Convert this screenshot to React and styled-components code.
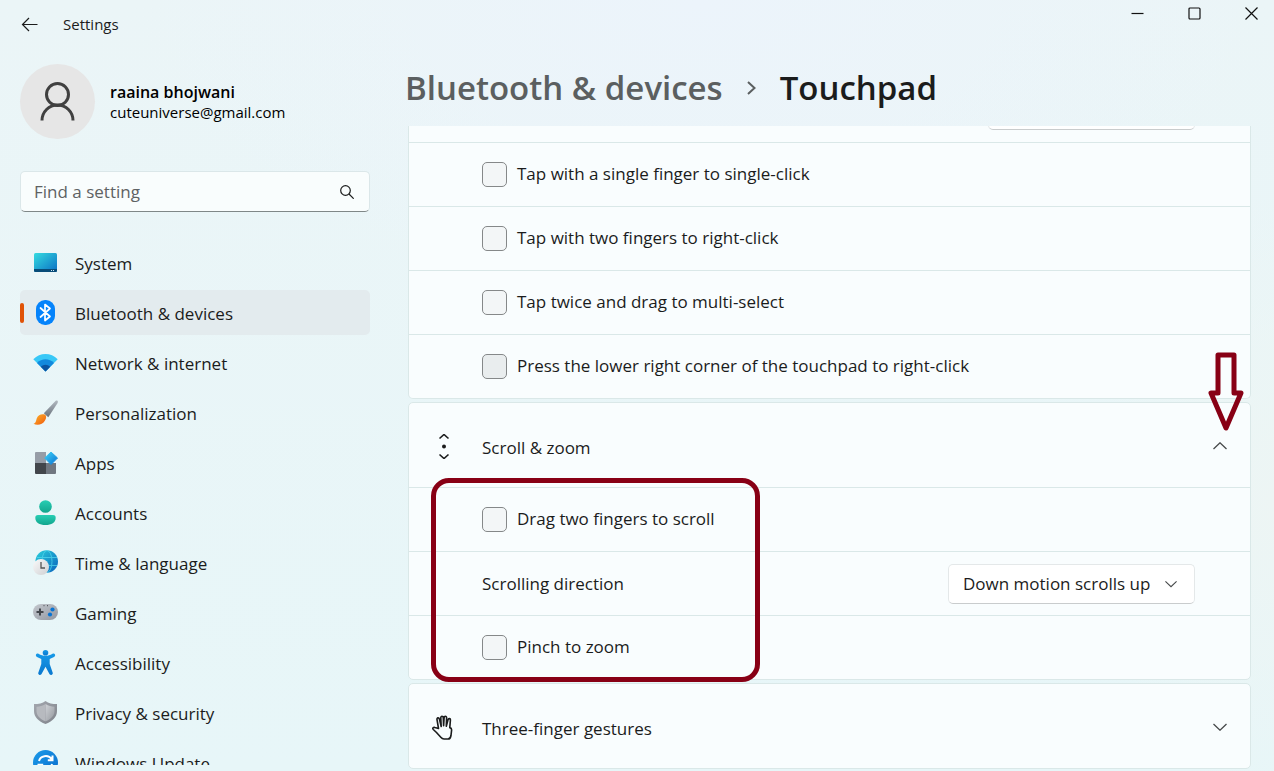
import React, { useState } from 'react';
import styled, { createGlobalStyle, css } from 'styled-components';

const GlobalStyle = createGlobalStyle`
  * {
    box-sizing: border-box;
  }

  body {
    margin: 0;
    color: #1b1c1c;
    font-family: 'Open Sans', 'Noto Sans', sans-serif;
    font-size: 17px;
    line-height: 24px;
  }

  button, input, select {
    margin: 0;
    color: inherit;
    font: inherit;
  }
`;

const Window = styled.div`
  display: flex;
  flex-direction: column;
  height: 100vh;
  overflow: hidden;
  background:
    radial-gradient(ellipse 45% 40% at 55% 0, #ecf4fb, rgba(236, 244, 251, 0)),
    radial-gradient(ellipse 14% 40% at 100% 65%, #edf5f4, rgba(237, 245, 244, 0)),
    linear-gradient(#ebf5f7, #e7f6f8);
`;

const TitleBar = styled.header`
  display: flex;
  justify-content: space-between;
  height: 48px;
  padding: 0 0 0 20px;
`;

const TitleGroup = styled.div`
  display: flex;
  align-items: center;
  gap: 23px;
  font-size: 15px;
`;

const IconButton = styled.button`
  display: flex;
  padding: 0;
  border: 0;
  background: none;
`;

const Controls = styled.div`
  display: flex;
  gap: 11px;
`;

const ControlButton = styled(IconButton)`
  align-items: center;
  justify-content: center;
  width: 46px;
  height: 26px;
`;

const Body = styled.div`
  display: grid;
  grid-template-columns: 370px minmax(0, 1fr);
  gap: 38px;
  flex: 1;
  min-height: 0;
`;

const Sidebar = styled.aside`
  display: flex;
  flex-direction: column;
  min-height: 0;
  padding: 16px 0 6px 20px;
`;

const Profile = styled.div`
  display: flex;
  align-items: center;
  gap: 15px;
`;

const Avatar = styled.div`
  display: flex;
  align-items: center;
  justify-content: center;
  width: 75px;
  height: 75px;
  border-radius: 50%;
  background: #e6e6e6;
`;

const UserName = styled.div`
  color: #000;
  font-size: 16px;
  font-weight: 600;
  line-height: 20px;
`;

const UserMail = styled.div`
  color: #000;
  font-size: 15px;
  line-height: 20px;
`;

const Search = styled.label`
  display: flex;
  align-items: center;
  height: 41px;
  margin-top: 32px;
  padding: 0 15px 0 13px;
  border: 1px solid #dbe7e9;
  border-bottom-color: #7f8787;
  border-radius: 5px;
  background: #f9fdfd;
`;

const SearchInput = styled.input`
  flex: 1;
  min-width: 0;
  padding: 0;
  border: 0;
  outline: 0;
  background: none;

  &::placeholder {
    color: #5e6263;
    opacity: 1;
  }
`;

const Nav = styled.nav`
  display: flex;
  flex: 1;
  flex-direction: column;
  gap: 5px;
  min-height: 0;
  margin-top: 28px;
  overflow: hidden;
`;

const NavLink = styled.a`
  display: flex;
  flex: none;
  align-items: center;
  gap: 17px;
  height: 45px;
  padding-right: 12px;
  border-radius: 5px;
  color: inherit;
  text-decoration: none;

  &::before {
    width: 4px;
    height: 20px;
    margin-right: -8px;
    border-radius: 2px;
    content: '';
  }

  ${({ $active }) => $active && css`
    background: #e3ebee;

    &::before {
      background: #e05206;
    }
  `}
`;

const NavLabel = styled.span`
  padding-top: 2px;
`;

const Main = styled.main`
  display: flex;
  flex-direction: column;
  min-width: 0;
  min-height: 0;
  padding: 2px 23px 0 0;
`;

const Breadcrumb = styled.h1`
  display: flex;
  flex: none;
  align-items: center;
  gap: 24px;
  height: 76px;
  margin: 0 0 0 -3px;
  font-size: 33px;
  font-weight: 600;
  line-height: 48px;
`;

const Crumb = styled.a`
  color: #5b5f60;
  text-decoration: none;
`;

const List = styled.div`
  display: flex;
  flex: 1;
  flex-direction: column;
  gap: 3px;
  min-height: 0;
  overflow: hidden;
`;

const Card = styled.section`
  position: relative;
  flex: none;
  border: 1px solid #dae8e8;
  border-radius: ${({ $scrolled }) => ($scrolled ? '0 0 5px 5px' : '5px')};
  border-top-width: ${({ $scrolled }) => ($scrolled ? 0 : 1)}px;
  background: #f9fdfe;
`;

const CardHeader = styled.div`
  display: grid;
  grid-template-columns: 24px minmax(0, 1fr) auto;
  align-items: center;
  gap: 26px;
  height: 84px;
  padding: 2px 23px 0 23px;
`;

const CardTitle = styled.span`
  padding-top: 4px;
`;

const Row = styled.div`
  display: flex;
  align-items: center;
  justify-content: space-between;
  height: 64px;
  padding: 0 55px 0 73px;
  border-top: 1px solid #dae8e8;
`;

const ScrolledRow = styled.div`
  display: flex;
  align-items: flex-end;
  justify-content: flex-end;
  height: 16px;
  padding: 0 55px 12px 73px;
  overflow: hidden;
`;

const CheckLabel = styled.label`
  display: flex;
  align-items: center;
  gap: 10px;
`;

const CheckText = styled.span`
  padding-bottom: 2px;
`;

const Checkbox = styled.input.attrs({ type: 'checkbox' })`
  width: 25px;
  height: 25px;
  border: 1px solid #858889;
  border-radius: 5px;
  background: ${({ $muted }) => ($muted ? '#e9edee' : '#f3f6f7')};
  appearance: none;
`;

const SelectBox = styled.div`
  display: grid;
  flex: none;
  align-items: center;
  width: ${({ $width }) => $width}px;
  height: 40px;

  > * {
    grid-area: 1 / 1;
  }

  > svg {
    justify-self: end;
    margin-right: 18px;
    pointer-events: none;
  }
`;

const Select = styled.select`
  width: 100%;
  height: 40px;
  padding: 0 40px 0 14px;
  border: 1px solid #e4e8e9;
  border-bottom-color: #c9cccd;
  border-radius: 5px;
  background: #fff;
  appearance: none;
`;

const HighlightBox = styled.div`
  position: absolute;
  top: 75px;
  left: 22px;
  width: 329px;
  height: 204px;
  border: 5px solid #880015;
  border-radius: 18px;
  pointer-events: none;
`;

const Arrow = styled.svg`
  position: absolute;
  top: -51px;
  right: 6px;
  pointer-events: none;
`;

const Icon = ({ size = 25, children, ...rest }) => (
  <svg width={size} height={size} viewBox={`0 0 ${size} ${size}`} fill="none" aria-hidden="true" {...rest}>
    {children}
  </svg>
);

const Gradient = ({ id, from, to, x2 = 1, y2 = 1 }) => (
  <linearGradient id={id} x1="0" y1="0" x2={x2} y2={y2}>
    <stop stopColor={from} />
    <stop offset="1" stopColor={to} />
  </linearGradient>
);

const Chevron = ({ up, size = 14 }) => (
  <svg width={size} height="8" viewBox="0 0 14 8" fill="none" stroke="#46494a" strokeWidth="1.3" aria-hidden="true">
    <path d={up ? 'M.5 7 7 .8 13.500 7' : 'M.5 1 7 7.200 13.500 1'} />
  </svg>
);

const SystemIcon = () => (
  <Icon>
    <Gradient id="system" from="#35dbe0" to="#0a6fc4" />
    <rect x="1" y="3" width="23" height="19" rx="1.500" fill="url(#system)" />
    <path d="M1 19h23v1.500a1.500 1.500 0 0 1-1.500 1.500h-20A1.500 1.500 0 0 1 1 20.500z" fill="#084c78" />
    <path d="M18 20.500h1M20 20.500h1" stroke="#cfe8f5" />
  </Icon>
);

const BluetoothIcon = () => (
  <Icon>
    <rect x="3" width="19" height="25" rx="9" fill="#0583fb" />
    <path d="m7.500 8 9.500 8.500-5 4v-16l5 4L7.500 17" stroke="#fff" strokeWidth="1.700" strokeLinejoin="round" strokeLinecap="round" />
  </Icon>
);

const NetworkIcon = () => (
  <Icon>
    <path d="M.3 9.300C7 2.200 18 2.200 24.700 9.300L12.500 21.500z" fill="#38c8f7" />
    <path d="M4 13c4.700-5 12.300-5 17 0l-8.500 8.500z" fill="#1389dd" />
    <path d="M7.800 16.800c2.600-2.700 6.800-2.700 9.400 0l-4.700 4.700z" fill="#0c54a0" />
  </Icon>
);

const PersonalizationIcon = () => (
  <Icon>
    <Gradient id="handle" from="#b1b8bf" to="#69727c" x2={0} />
    <Gradient id="bristle" from="#fdb62b" to="#f0590d" />
    <path d="M22.500.9c1.600-1 3 .3 2.100 2L15.300 17.300l-4.500-4z" fill="url(#handle)" />
    <path d="M10.800 14.300c2.200 0 3.300 3 1.200 6.200C9.500 25 4 25.400.5 23.800c2.500-.6 2.400-2.600 3.300-5.500 1-3 4.300-4.500 7-4z" fill="url(#bristle)" />
  </Icon>
);

const AppsIcon = () => (
  <Icon>
    <Gradient id="diamond" from="#3fd3f7" to="#0873d4" />
    <path d="M2 3a1 1 0 0 1 1-1h10v11H2z" fill="#969da7" />
    <path d="M2 13h11v11H3a1 1 0 0 1-1-1z" fill="#42464b" />
    <path d="M13 13h10v10a1 1 0 0 1-1 1h-9z" fill="#707780" />
    <path d="m18 2 6.500 6-6.500 6.500L11.700 8z" fill="url(#diamond)" stroke="url(#diamond)" strokeLinejoin="round" />
  </Icon>
);

const AccountsIcon = () => (
  <Icon>
    <Gradient id="account" from="#27ceb4" to="#12a58d" x2={0} />
    <circle cx="12.500" cy="6.500" r="6.300" fill="url(#account)" />
    <path d="M5 15h15a2.700 2.700 0 0 1 2.700 2.700C22.700 22.500 18.500 25 12.500 25S2.300 22.500 2.300 17.700A2.700 2.700 0 0 1 5 15z" fill="url(#account)" />
  </Icon>
);

const TimeIcon = () => (
  <Icon>
    <Gradient id="globe" from="#2bd0dc" to="#0a62bd" />
    <Gradient id="clock" from="#fafafa" to="#cfd0d3" />
    <circle cx="13.700" cy="11.500" r="11.300" fill="url(#globe)" />
    <g stroke="#55dcf0" strokeWidth="1" opacity="0.7">
      <ellipse cx="14" cy="11.500" rx="5" ry="11" />
      <path d="M4 7.500h20M4 15.500h20" />
    </g>
    <circle cx="8" cy="17" r="8" fill="url(#clock)" />
    <path d="M8 12v6h4" stroke="#555" strokeWidth="1.300" />
  </Icon>
);

const GamingIcon = () => (
  <Icon>
    <Gradient id="pad" from="#c4c8ce" to="#9297a0" />
    <rect y="4" width="25" height="16" rx="8" fill="url(#pad)" />
    <path d="M7 8.500v7M3.500 12h7" stroke="#43474c" strokeWidth="2" />
    <circle cx="19.500" cy="9.500" r="2.100" fill="#0874d3" />
    <circle cx="17" cy="14.500" r="2.100" fill="#0874d3" />
    <path d="M10.500 5.700h1M14 5.700h1" stroke="#43474c" />
  </Icon>
);

const AccessibilityIcon = () => (
  <Icon>
    <Gradient id="person" from="#1699e8" to="#0a78cf" x2={0} />
    <circle cx="12.500" cy="2.800" r="2.800" fill="url(#person)" />
    <path d="M3 4.500c.5-1.200 1.500-1.300 2.500-.8 4.600 2.800 9.400 2.800 14 0 1-.5 2-.4 2.500.8.400 1.200 0 2-1 2.500l-4.300 2v5l3 8.700c.3 1.200-.2 2-1.200 2.200-1 .3-1.800-.2-2.200-1.100l-3.800-7-3.800 7c-.4.9-1.200 1.400-2.200 1.100-1-.2-1.500-1-1.200-2.200l3-8.700V9L4 7c-1-.5-1.400-1.300-1-2.500z" fill="url(#person)" />
  </Icon>
);

const PrivacyIcon = () => (
  <Icon>
    <Gradient id="shield" from="#a4a8af" to="#7f838a" />
    <Gradient id="shieldInner" from="#d0d3d7" to="#94989e" />
    <path d="M12.500 1c3 2.500 7 3 11.500 3v7c0 6-4.500 10.500-11.500 13C5.500 21.500 1 17 1 11V4c4.500 0 8.500-.5 11.500-3z" fill="url(#shield)" />
    <path d="M12.500 4c3 2 6 2.600 9 2.700V11c0 4.800-3.500 8-9 10.300z" fill="url(#shieldInner)" />
    <path d="M12.500 4v17.300C7 19 3.500 15.800 3.500 11V6.700c3-.1 6-.7 9-2.700z" fill="#b7babf" />
  </Icon>
);

const UpdateIcon = () => (
  <Icon>
    <Gradient id="update" from="#1b9be9" to="#0a6ccc" />
    <circle cx="12.500" cy="12.500" r="12.500" fill="url(#update)" />
    <path d="M6 11c1.200-5 9-7.300 13-1.500M19.500 5.500v4.700h-4.700M19 14c-1.200 5-9 7.300-13 1.500M5.500 19.500v-4.700h4.700" stroke="#fff" strokeWidth="2" />
  </Icon>
);

const ScrollIcon = () => (
  <Icon>
    <path d="m7.500 4.500 4.500-4 4.500 4M7.500 20.500l4.500 4 4.500-4" stroke="#1b1c1c" strokeWidth="1.600" />
    <circle cx="12" cy="12.500" r="2" fill="#1b1c1c" />
  </Icon>
);

const HandIcon = () => (
  <Icon stroke="#1b1c1c" strokeWidth="1.600" strokeLinejoin="round" strokeLinecap="round">
    <path d="M6.500 13.500 5 4.500c-.3-1.900 2-2.200 2.400-.4L9.200 11.500 8.800 2.800c-.1-2 2.400-2 2.500 0l.3 8 .5-8c.1-2 2.600-2 2.500 0l-.3 8.500L16 4.800c.4-1.800 2.600-1.500 2.400.3l-.6 7.500c1.200.3 1.900 1.100 1.800 2.500l-.6 5.400c-.4 2.500-1.500 3.500-3 3.500h-4c-1.500 0-2.300-.6-3.200-1.700L4.500 17.500l-3.200-3c-1.200-1.200.2-2.600 1.600-2z" />
  </Icon>
);

const navItems = [
  { label: 'System', icon: SystemIcon },
  { label: 'Bluetooth & devices', icon: BluetoothIcon },
  { label: 'Network & internet', icon: NetworkIcon },
  { label: 'Personalization', icon: PersonalizationIcon },
  { label: 'Apps', icon: AppsIcon },
  { label: 'Accounts', icon: AccountsIcon },
  { label: 'Time & language', icon: TimeIcon },
  { label: 'Gaming', icon: GamingIcon },
  { label: 'Accessibility', icon: AccessibilityIcon },
  { label: 'Privacy & security', icon: PrivacyIcon },
  { label: 'Windows Update', icon: UpdateIcon },
];

const tapOptions = [
  { label: 'Tap with a single finger to single-click' },
  { label: 'Tap with two fingers to right-click' },
  { label: 'Tap twice and drag to multi-select' },
  { label: 'Press the lower right corner of the touchpad to right-click', muted: true },
];

const CheckRow = ({ label, muted }) => (
  <Row>
    <CheckLabel>
      <Checkbox $muted={muted} />
      <CheckText>{label}</CheckText>
    </CheckLabel>
  </Row>
);

export default function App() {
  const [active, setActive] = useState('Bluetooth & devices');

  return (
    <Window>
      <GlobalStyle />
      <TitleBar>
        <TitleGroup>
          <IconButton aria-label="Back">
            <Icon size={20} stroke="#1b1c1c" strokeWidth="1.200">
              <path d="M17.500 10.500h-15M9 4 2.500 10.500 9 17" />
            </Icon>
          </IconButton>
          <span>Settings</span>
        </TitleGroup>
        <Controls>
          <ControlButton aria-label="Minimize">
            <Icon size={13} stroke="#111" strokeWidth="1.200"><path d="M.5 6.500h12" /></Icon>
          </ControlButton>
          <ControlButton aria-label="Maximize">
            <Icon size={13} stroke="#111" strokeWidth="1.200"><rect x="1" y="1" width="11" height="11" rx="1" /></Icon>
          </ControlButton>
          <ControlButton aria-label="Close">
            <Icon size={13} stroke="#111" strokeWidth="1.200"><path d="m.5.5 12 12M12.500.5l-12 12" /></Icon>
          </ControlButton>
        </Controls>
      </TitleBar>
      <Body>
        <Sidebar>
          <Profile>
            <Avatar>
              <Icon size={39} stroke="#404040" strokeWidth="3">
                <circle cx="19.500" cy="12.500" r="11" />
                <path d="M4 38.500a15.500 15.500 0 0 1 31 0" />
              </Icon>
            </Avatar>
            <div>
              <UserName>raaina bhojwani</UserName>
              <UserMail>cuteuniverse@gmail.com</UserMail>
            </div>
          </Profile>
          <Search>
            <SearchInput type="text" placeholder="Find a setting" aria-label="Find a setting" />
            <Icon size={14} stroke="#1b1c1c" strokeWidth="1.200">
              <circle cx="5.500" cy="5.500" r="4.800" />
              <path d="m9 9 4.700 4.700" />
            </Icon>
          </Search>
          <Nav>
            {navItems.map(({ label, icon: NavIcon }) => (
              <NavLink
                key={label}
                href="#"
                $active={label === active}
                onClick={() => setActive(label)}
              >
                <NavIcon />
                <NavLabel>{label}</NavLabel>
              </NavLink>
            ))}
          </Nav>
        </Sidebar>
        <Main>
          <Breadcrumb>
            <Crumb href="#">Bluetooth &amp; devices</Crumb>
            <svg width="9" height="14" viewBox="0 0 9 14" fill="none" stroke="#5b5f60" strokeWidth="2" aria-hidden="true">
              <path d="m1 1 6.500 6L1 13" />
            </svg>
            <span>Touchpad</span>
          </Breadcrumb>
          <List>
            <Card $scrolled>
              <ScrolledRow>
                <SelectBox $width={207}>
                  <Select aria-label="Touchpad sensitivity" />
                </SelectBox>
              </ScrolledRow>
              {tapOptions.map((option) => <CheckRow key={option.label} {...option} />)}
            </Card>
            <Card>
              <CardHeader>
                <ScrollIcon />
                <CardTitle>Scroll &amp; zoom</CardTitle>
                <IconButton aria-label="Collapse"><Chevron up /></IconButton>
              </CardHeader>
              <CheckRow label="Drag two fingers to scroll" />
              <Row>
                <label htmlFor="direction">Scrolling direction</label>
                <SelectBox $width={247}>
                  <Select id="direction">
                    <option>Down motion scrolls up</option>
                  </Select>
                  <Chevron size={12} />
                </SelectBox>
              </Row>
              <CheckRow label="Pinch to zoom" />
              <HighlightBox />
              <Arrow width="36" height="80" viewBox="0 0 36 80" fill="none" stroke="#880015" strokeWidth="5" strokeLinejoin="round">
                <path d="M10 3h16v38h7L18 76 3 41h7z" />
              </Arrow>
            </Card>
            <Card>
              <CardHeader>
                <HandIcon />
                <CardTitle>Three-finger gestures</CardTitle>
                <IconButton aria-label="Expand"><Chevron /></IconButton>
              </CardHeader>
            </Card>
          </List>
        </Main>
      </Body>
    </Window>
  );
}
